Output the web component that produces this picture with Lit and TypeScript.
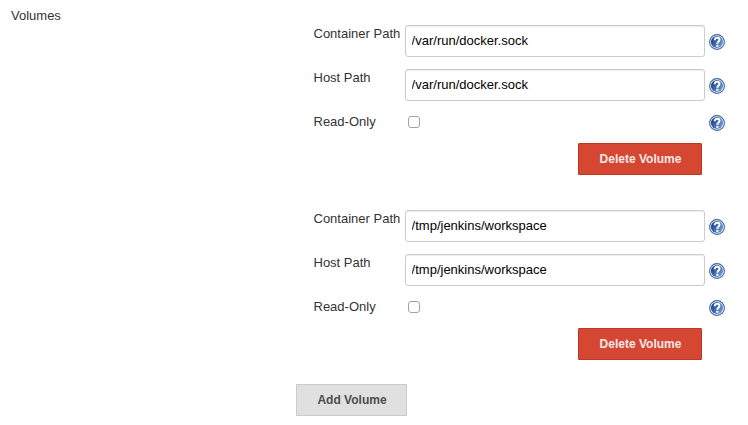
import { LitElement, html, css } from "lit";
import { customElement, property } from "lit/decorators.js";

@customElement("help-icon")
class HelpIcon extends LitElement {
  static styles = css`
    :host { display: block; width: 16px; height: 16px; }
    svg { display: block; }
  `;
  render() {
    return html`<svg width="16" height="16" viewBox="0 0 16 16" role="img" aria-label="Help">
      <defs>
        <linearGradient id="g" x1="0" y1="0.2" x2="1" y2="0.8">
          <stop offset="0.1" stop-color="#1c458c" />
          <stop offset="0.55" stop-color="#4a74b4" />
          <stop offset="1" stop-color="#7a9fd2" />
        </linearGradient>
      </defs>
      <circle cx="8" cy="8" r="7.4" fill="#fff" stroke="#3a66a5" stroke-width="1.1" />
      <circle cx="8" cy="8" r="6.1" fill="url(#g)" />
      <path d="M5.7 6.3C5.7 4.5 6.7 3.8 8.1 3.8C9.6 3.8 10.5 4.6 10.5 5.8C10.5 7.5 8.3 7.5 8.3 9.8" fill="none" stroke="#fff" stroke-width="2" />
      <rect x="7.2" y="10.8" width="2.2" height="2" fill="#fff" />
    </svg>`;
  }
}

@customElement("volume-entry")
class VolumeEntry extends LitElement {
  @property() containerPath = "";
  @property() hostPath = "";

  static styles = css`
    :host { display: flex; flex-direction: column; width: 412px; }
    .row {
      display: grid;
      grid-template-columns: 92px 300px 16px;
      column-gap: 0;
      justify-content: start;
      height: 32px;
      margin-bottom: 12px;
    }
    .row.short { height: 18px; }
    .label { line-height: 17px; padding-left: 0.5px; white-space: nowrap; }
    help-icon { margin: 9px 0 0 4px; }
    .short help-icon { margin-top: 2px; }
    .field {
      box-sizing: border-box;
      width: 300px;
      height: 32px;
      margin: 0;
      padding: 0 6px 1px 5.6px;
      border: 1px solid #ccc;
      border-radius: 3px;
      background: #fff;
      box-shadow: inset 0 1px 1px rgba(0, 0, 0, 0.075);
      color: #000;
      font: 13px "Liberation Sans", Arial, sans-serif;
      outline: none;
    }
    .check {
      appearance: none;
      box-sizing: border-box;
      width: 12px;
      height: 12px;
      margin: 3px 0 0 3px;
      border: 1px solid #a3a3a3;
      border-radius: 3px;
      background: #fff;
    }
    .delete {
      align-self: flex-end;
      box-sizing: border-box;
      width: 124px;
      height: 32px;
      margin-right: 23px;
      padding: 0 0 0 1px;
      border: 1px solid #c03520;
      border-radius: 1px;
      background: #d54733;
      color: #f5e9e7;
      font: bold 12px "Liberation Sans", Arial, sans-serif;
    }
  `;

  render() {
    return html`
      <div class="row">
        <span class="label">Container Path</span>
        <input class="field" type="text" .value=${this.containerPath} />
        <help-icon></help-icon>
      </div>
      <div class="row">
        <span class="label">Host Path</span>
        <input class="field" type="text" .value=${this.hostPath} />
        <help-icon></help-icon>
      </div>
      <div class="row short">
        <span class="label">Read-Only</span>
        <input class="check" type="checkbox" />
        <help-icon></help-icon>
      </div>
      <button class="delete">Delete Volume</button>
    `;
  }
}

@customElement("app-root")
class AppRoot extends LitElement {
  static styles = css`
    :host {
      display: grid;
      grid-template-columns: 296px 1fr;
      box-sizing: border-box;
      height: 425px;
      background: #fff;
      color: #333;
      font: 13px "Liberation Sans", Arial, sans-serif;
    }
    .title { padding: 7px 0 0 11px; line-height: 17px; }
    .volumes { display: flex; flex-direction: column; padding-top: 25px; }
    volume-entry { margin: 0 0 35px 17px; width: 412px; }
    volume-entry:last-of-type { margin-bottom: 24px; }
    .add {
      box-sizing: border-box;
      width: 111px;
      height: 32px;
      padding: 0 0 0 1px;
      border: 1px solid #ccc;
      background: #e0e0e0;
      color: #4d4d4d;
      font: bold 12px "Liberation Sans", Arial, sans-serif;
    }
  `;

  private volumes = ["/var/run/docker.sock", "/tmp/jenkins/workspace"];

  render() {
    return html`
      <div class="title">Volumes</div>
      <div class="volumes">
        ${this.volumes.map(
          (path) => html`<volume-entry .containerPath=${path} .hostPath=${path}></volume-entry>`
        )}
        <button class="add">Add Volume</button>
      </div>
    `;
  }
}
